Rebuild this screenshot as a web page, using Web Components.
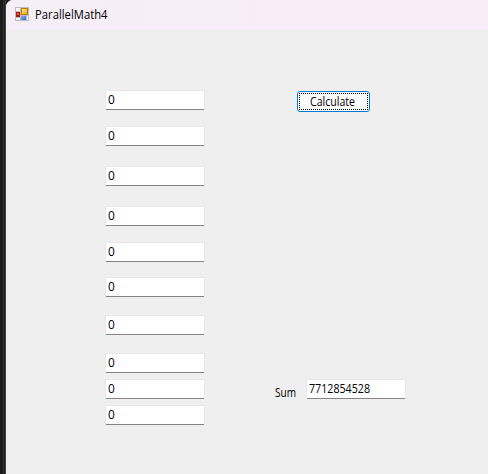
<!DOCTYPE html>
<html lang="en">
<head>
<meta charset="utf-8">
<title>ParallelMath4</title>
<style>
body { margin: 0; overflow: hidden; background: #1b1b1b; font: 12px/16px "Open Sans", "Noto Sans", sans-serif; color: #000; }
</style>
</head>
<body>
<app-window>
  <title-bar slot="title">ParallelMath4</title-bar>
  <sum-form></sum-form>
</app-window>
<script>
// Text condensed horizontally to an exact advance width.
class FitText extends HTMLElement {
  connectedCallback() {
    this.attachShadow({ mode: 'open' }).innerHTML = `
      <style>
        :host { display: block; flex: none; white-space: nowrap; text-align: left; }
        span { display: inline-block; transform-origin: 0 50%; }
      </style><span><slot></slot></span>`;
    const s = this.shadowRoot.querySelector('span');
    const w = Number(this.getAttribute('w'));
    const natural = s.getBoundingClientRect().width;
    this.style.width = w + 'px';
    if (natural) s.style.transform = `scaleX(${w / natural})`;
  }
}

class AppWindow extends HTMLElement {
  connectedCallback() {
    this.attachShadow({ mode: 'open' }).innerHTML = `
      <style>
        :host { display: flex; width: 488px; height: 474px; box-sizing: border-box;
          background: linear-gradient(90deg, #1b1b1b 0 3px, #333 3px 4px, #1b1b1b 4px 5px, #424242 5px 6px, #1b1b1b 6px);
          padding-left: 6px; }
        main { flex: 1; display: flex; flex-direction: column; overflow: hidden;
          border-top-left-radius: 7px; background: #efefef; }
      </style>
      <main><slot name="title"></slot><slot></slot></main>`;
  }
}

class FormIcon extends HTMLElement {
  connectedCallback() {
    this.attachShadow({ mode: 'open' }).innerHTML = `
      <style>:host { display: block; width: 14px; height: 14px; } svg { display: block; }</style>
      <svg width="14" height="14" viewBox="0 0 14 14" shape-rendering="crispEdges">
        <defs>
          <linearGradient id="y" x2="1" y2="1"><stop stop-color="#ffe58a"/><stop offset="1" stop-color="#e9a800"/></linearGradient>
          <linearGradient id="b" x2="1" y2="1"><stop stop-color="#83b5f5"/><stop offset="1" stop-color="#2d68cf"/></linearGradient>
        </defs>
        <rect width="14" height="14" fill="#bdbdc1"/>
        <rect x="1" y="1" width="4" height="3" fill="#f6f5f8"/>
        <rect x="1" y="11" width="4" height="2" fill="#f6f5f8"/>
        <rect x="12" y="9" width="1" height="4" fill="#f6f5f8"/>
        <rect x="1" y="5" width="4" height="5" fill="#a81408"/>
        <rect x="2" y="6" width="2" height="2" fill="#e85c4c"/>
        <rect x="6" y="1" width="7" height="7" fill="#b98008"/>
        <rect x="7" y="2" width="5" height="5" fill="url(#y)"/>
        <rect x="6" y="9" width="5" height="4" fill="url(#b)"/>
      </svg>`;
  }
}

class TitleBar extends HTMLElement {
  connectedCallback() {
    const title = this.textContent;
    this.attachShadow({ mode: 'open' }).innerHTML = `
      <style>
        :host { display: flex; align-items: flex-start; gap: 5.5px; height: 30px; box-sizing: border-box;
          padding: 7px 0 0 9px; background: linear-gradient(90deg, #f4eff7, #f9edf7 60%); }
      </style>
      <form-icon></form-icon><fit-text w="72.5">${title}</fit-text>`;
  }
}

class TextField extends HTMLElement {
  connectedCallback() {
    this.attachShadow({ mode: 'open' }).innerHTML = `
      <style>
        :host { display: block; width: 100px; height: 20px; box-sizing: border-box; background: #fff;
          border: 1px solid #e8e8e8; border-bottom: 0; padding: 1px 0 0 1.6px; }
        :host::after { content: ""; display: block; height: 1px; margin: 1px 0 0 -1.6px; background: #848484; }
      </style>
      <fit-text w="${this.getAttribute('w') || 6.8}">${this.getAttribute('value')}</fit-text>`;
  }
}

class PushButton extends HTMLElement {
  connectedCallback() {
    this.attachShadow({ mode: 'open' }).innerHTML = `
      <style>
        :host { display: block; width: 73px; height: 21px; box-sizing: border-box;
          border: 1px solid #0078d4; border-radius: 3px; background: #fdfdfd; padding: 1px; }
        div { box-sizing: border-box; height: 17px; border: 1px dotted #000; padding: 0 0 0 10px; }
      </style>
      <div><fit-text w="45"><slot></slot></fit-text></div>`;
  }
}

class SumForm extends HTMLElement {
  connectedCallback() {
    const heights = [36, 40, 40, 36, 35, 38, 38, 26, 26, 20];
    this.attachShadow({ mode: 'open' }).innerHTML = `
      <style>
        :host { display: flex; align-items: flex-start; flex: 1; padding: 60px 0 0 99px; }
        .inputs { display: grid; grid-template-rows: ${heights.map(h => h + 'px').join(' ')}; }
        .side { display: flex; flex-direction: column; width: 131px; margin-left: 70px; }
        push-button { margin: 1px 0 0 22px; }
        .result { display: flex; justify-content: space-between; margin-top: 267px; }
        .result > fit-text { margin-top: 6px; }
      </style>
      <div class="inputs">${heights.map(() => '<text-field value="0"></text-field>').join('')}</div>
      <div class="side">
        <push-button>Calculate</push-button>
        <div class="result"><fit-text w="21">Sum</fit-text><text-field value="7712854528" w="61"></text-field></div>
      </div>`;
  }
}

customElements.define('fit-text', FitText);
customElements.define('form-icon', FormIcon);
customElements.define('text-field', TextField);
customElements.define('push-button', PushButton);
customElements.define('title-bar', TitleBar);
customElements.define('sum-form', SumForm);
customElements.define('app-window', AppWindow);
</script>
</body>
</html>
